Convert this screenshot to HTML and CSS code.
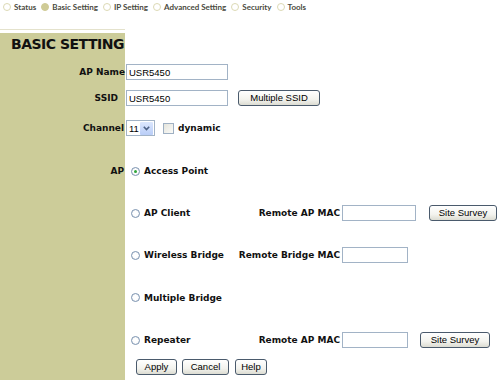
FILE: index.html
```html
<!DOCTYPE html>
<html>
<head>
<meta charset="utf-8">
<title>Basic Setting</title>
<link rel="stylesheet" href="styles.css">
</head>
<body>
<nav class="nav">
  <span class="tab"><i class="dot"></i>Status</span>
  <span class="tab"><i class="dot on"></i>Basic Setting</span>
  <span class="tab"><i class="dot"></i>IP Setting</span>
  <span class="tab"><i class="dot"></i>Advanced Setting</span>
  <span class="tab"><i class="dot"></i>Security</span>
  <span class="tab"><i class="dot"></i>Tools</span>
</nav>
<div class="rule"></div>
<main class="page">
  <div class="row h-title"><h1 class="title">BASIC SETTING</h1></div>

  <div class="row h26">
    <span class="lbl">AP Name</span>
    <div class="cell"><input class="text w-name" type="text" value="USR5450"></div>
  </div>

  <div class="row h26">
    <span class="lbl pad7">SSID</span>
    <div class="cell">
      <input class="text w-name" type="text" value="USR5450">
      <button class="btn b-ssid" type="button">Multiple SSID</button>
    </div>
  </div>

  <div class="row h34">
    <span class="lbl pad1">Channel</span>
    <div class="cell">
      <span class="select"><span class="sel-val">11</span><span class="sel-btn"><svg width="7" height="5" viewBox="0 0 7 5"><path d="M0.8 0.8 L3.5 3.6 L6.2 0.8" fill="none" stroke="#4d6185" stroke-width="1.6"/></svg></span></span>
      <span class="check"></span>
      <span class="opt-name">dynamic</span>
    </div>
  </div>

  <div class="row h42 mt5">
    <span class="lbl pad1">AP</span>
    <div class="cell">
      <span class="radio on"></span><span class="opt-name">Access Point</span>
    </div>
  </div>

  <div class="row h42">
    <span class="lbl"></span>
    <div class="cell">
      <div class="opt"><span class="radio"></span><span class="opt-name">AP Client</span></div>
      <span class="mac-lbl">Remote AP MAC</span>
      <input class="text w-mac1" type="text" value="">
      <button class="btn b-survey1" type="button">Site Survey</button>
    </div>
  </div>

  <div class="row h42">
    <span class="lbl"></span>
    <div class="cell">
      <div class="opt"><span class="radio"></span><span class="opt-name">Wireless Bridge</span></div>
      <span class="mac-lbl">Remote Bridge MAC</span>
      <input class="text w-mac2" type="text" value="">
    </div>
  </div>

  <div class="row h43">
    <span class="lbl"></span>
    <div class="cell">
      <div class="opt"><span class="radio"></span><span class="opt-name">Multiple Bridge</span></div>
    </div>
  </div>

  <div class="row h36 mt3">
    <span class="lbl"></span>
    <div class="cell">
      <div class="opt"><span class="radio"></span><span class="opt-name">Repeater</span></div>
      <span class="mac-lbl">Remote AP MAC</span>
      <input class="text w-mac2" type="text" value="">
      <button class="btn b-survey2" type="button">Site Survey</button>
    </div>
  </div>

  <div class="row h17">
    <span class="lbl"></span>
    <div class="cell actions">
      <button class="btn b-apply" type="button">Apply</button>
      <button class="btn b-cancel" type="button">Cancel</button>
      <button class="btn b-help" type="button">Help</button>
    </div>
  </div>
</main>
</body>
</html>
```

FILE: styles.css
```css
html, body {
  margin: 0;
  padding: 0;
  background: #fff;
}

body {
  width: 500px;
  height: 380px;
  overflow: hidden;
  font-family: "DejaVu Sans", Verdana, sans-serif;
  color: #000;
}

/* top navigation */
.nav {
  height: 13px;
  display: flex;
  align-items: center;
  padding-left: 3px;
  font-family: Lato, "Open Sans", sans-serif;
  font-weight: 700;
  font-size: 8px;
  color: #4a4a40;
  margin-bottom: 16px;
}

.tab {
  display: flex;
  align-items: center;
  margin-right: 5px;
}

.dot {
  display: inline-block;
  box-sizing: border-box;
  width: 8px;
  height: 8px;
  border-radius: 50%;
  border: 1px solid #dcd9b4;
  background: #fff;
  margin-right: 3px;
}

.dot.on {
  background: #cfcb96;
  border-color: #cfcb96;
}

.rule {
  width: 125px;
  height: 1px;
  background: #e4e2cc;
  margin-bottom: 3px;
}

/* main form */
.page {
  height: 347px;
  background: linear-gradient(to right, #cccc99 125px, #fff 125px);
}

.row {
  display: flex;
  align-items: center;
}

.h-title { height: 26px; align-items: flex-start; }
.h26 { height: 26px; }
.h34 { height: 34px; }
.h42 { height: 42px; }
.h43 { height: 43px; }
.h36 { height: 36px; }
.h17 { height: 17px; }
.mt5 { margin-top: 5px; }
.mt3 { margin-top: 3px; }

.title {
  margin: 0;
  padding: 3px 0 0 11px;
  font-size: 14px;
  line-height: 17px;
  letter-spacing: -0.5px;
  font-weight: 700;
  color: #111;
}

.lbl {
  width: 125px;
  flex: none;
  box-sizing: border-box;
  text-align: right;
  font-size: 9px;
  font-weight: 700;
  color: #111;
}

.pad7 { padding-right: 7px; }
.pad1 { padding-right: 1px; }

.cell {
  display: flex;
  align-items: center;
}

.text {
  box-sizing: border-box;
  height: 16px;
  margin: 0 0 0 1px;
  padding: 0 2px;
  border: 1px solid #a2b3c6;
  background: #fff;
  font-family: "Liberation Sans", Arial, sans-serif;
  font-size: 9.5px;
  color: #000;
  outline: none;
}

.w-name { width: 102px; }
.w-mac1 { width: 74px; margin-left: 2px; }
.w-mac2 { width: 66px; margin-left: 2px; }

.btn {
  box-sizing: border-box;
  height: 16px;
  margin: 0;
  padding: 0;
  border: 1px solid #4a5a6c;
  border-radius: 3px;
  background: linear-gradient(#ffffff, #f3f3ee 60%, #dcdcd2);
  font-family: "Liberation Sans", Arial, sans-serif;
  font-size: 9.5px;
  color: #000;
  line-height: 14px;
}

.b-ssid { width: 82px; margin-left: 10px; }
.b-survey1 { width: 68px; margin-left: 13px; }
.b-survey2 { width: 70px; margin-left: 12px; }

.actions { padding-left: 11px; }
.b-apply { width: 41px; }
.b-cancel { width: 47px; margin-left: 5px; }
.b-help { width: 32px; margin-left: 6px; }

/* fake select */
.select {
  box-sizing: border-box;
  display: flex;
  align-items: center;
  width: 29px;
  height: 16px;
  margin-left: 1px;
  border: 1px solid #a2b3c6;
  background: #fff;
  font-family: "Liberation Sans", Arial, sans-serif;
  font-size: 9.5px;
}

.sel-val {
  flex: 1;
  padding-left: 2px;
}

.sel-btn {
  width: 13px;
  height: 13px;
  margin-right: 1px;
  display: flex;
  align-items: center;
  justify-content: center;
  background: linear-gradient(#dce7fd, #b9cdf7);
  border-radius: 1px;
}

.check {
  box-sizing: border-box;
  width: 11px;
  height: 11px;
  margin-left: 8px;
  margin-right: 4px;
  border: 1px solid #9fb0c3;
  background: linear-gradient(135deg, #e4e4dc, #fbfbf8);
}

.opt-name {
  font-size: 9px;
  font-weight: 700;
  color: #111;
}

.radio {
  box-sizing: border-box;
  width: 9px;
  height: 9px;
  margin-left: 6px;
  margin-right: 4px;
  border: 1px solid #7b93b0;
  border-radius: 50%;
  background: radial-gradient(circle, #ffffff 40%, #e6e9ee 100%);
  position: relative;
}

.radio.on::after {
  content: "";
  position: absolute;
  left: 2px;
  top: 2px;
  width: 3px;
  height: 3px;
  border-radius: 50%;
  background: #2fa63a;
}

.opt {
  width: 215px;
  display: flex;
  align-items: center;
}

.mac-lbl {
  margin-left: -100px;
  width: 100px;
  text-align: right;
  white-space: nowrap;
  font-size: 9px;
  font-weight: 700;
  color: #111;
  direction: rtl;
}
```
